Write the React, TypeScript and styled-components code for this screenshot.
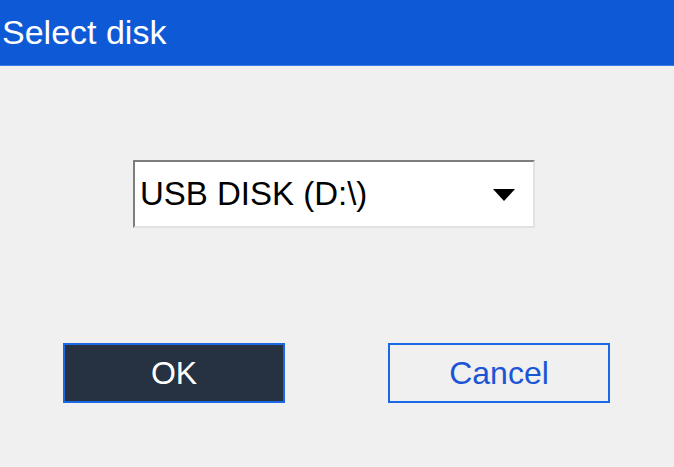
import React, { useState } from "react";
import styled, { createGlobalStyle } from "styled-components";

const GlobalStyle = createGlobalStyle`
    html, body {
        margin: 0;
        padding: 0;
        background: #f0f0f0;
    }
    body {
        font-family: "Liberation Sans", Arial, sans-serif;
    }
`;

const Dialog = styled.div`
    width: 674px;
    height: 467px;
    display: flex;
    flex-direction: column;
    background: #f0f0f0;
    overflow: hidden;
`;

const TitleBar = styled.div`
    height: 65px;
    background: #0e5ad6;
    border-bottom: 1px solid #3b7be3;
    display: flex;
    align-items: center;
    padding-left: 2px;
    color: #ffffff;
    font-size: 34px;
`;

const Body = styled.div`
    flex: 1;
    display: flex;
    flex-direction: column;
    align-items: center;
    padding-top: 94px;
`;

const Select = styled.div`
    width: 402px;
    height: 68px;
    margin-left: -6px;
    box-sizing: border-box;
    background: #ffffff;
    border-top: 2px solid #7d7d7d;
    border-left: 2px solid #7d7d7d;
    border-right: 2px solid #e2e2e2;
    border-bottom: 2px solid #e2e2e2;
    display: flex;
    align-items: center;
    justify-content: space-between;
    padding: 0 18px 0 5px;
    font-size: 33px;
    color: #000000;
    cursor: pointer;
`;

const Arrow = styled.span`
    width: 0;
    height: 0;
    border-left: 11px solid transparent;
    border-right: 11px solid transparent;
    border-top: 12px solid #000000;
    margin-top: 2px;
`;

const ButtonRow = styled.div`
    align-self: stretch;
    display: flex;
    justify-content: space-between;
    padding: 0 64px 0 63px;
    margin-top: 115px;
`;

const Button = styled.button<{ $primary?: boolean }>`
    width: 222px;
    height: 60px;
    box-sizing: border-box;
    font-family: "Liberation Sans", Arial, sans-serif;
    font-size: 32px;
    cursor: pointer;
    border: 2px solid #1b68e6;
    background: ${(p) => (p.$primary ? "#263141" : "#f0f0f0")};
    color: ${(p) => (p.$primary ? "#ffffff" : "#1b55d6")};
    padding: 0;
`;

const App: React.FC = () => {
    const [disk] = useState<string>("USB DISK (D:\\)");
    return (
        <Dialog>
            <GlobalStyle />
            <TitleBar>Select disk</TitleBar>
            <Body>
                <Select>
                    <span>{disk}</span>
                    <Arrow />
                </Select>
                <ButtonRow>
                    <Button $primary>OK</Button>
                    <Button>Cancel</Button>
                </ButtonRow>
            </Body>
        </Dialog>
    );
};

export default App;
